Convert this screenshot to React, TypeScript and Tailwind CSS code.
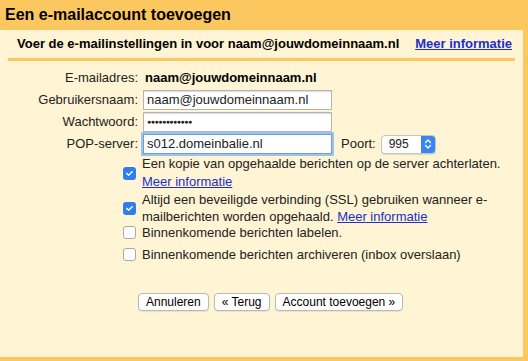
import { FaCheck } from "react-icons/fa";

function Check({ checked }: { checked: boolean }) {
  return checked ? (
    <span className="flex h-[13px] w-[13px] shrink-0 items-center justify-center rounded-[3px] bg-[#2f7ef0] text-white">
      <FaCheck className="h-[7px] w-[7px]" />
    </span>
  ) : (
    <span className="h-[13px] w-[13px] shrink-0 rounded-[3px] border border-[#a9a9a9] bg-white" />
  );
}

export default function App() {
  const font = { fontFamily: '"Liberation Sans", Arial, sans-serif' };

  return (
    <div className="flex h-[361px] w-[528px] flex-col bg-[#fcc75e] text-[13px] text-[#222]" style={font}>
      {/* Title */}
      <div className="flex h-[30px] items-center px-[5px] text-[16px] font-bold text-black">
        Een e-mailaccount toevoegen
      </div>

      {/* Panel */}
      <div className="mb-[4px] mr-[5px] flex flex-1 flex-col bg-[#fff4d3]">
        <div className="mx-[8px] flex h-[31px] items-center justify-between border-b-[3px] border-[#fcc75e] pl-[9px] pr-[3px] font-bold text-black">
          <span>Voer de e-mailinstellingen in voor naam@jouwdomeinnaam.nl</span>
          <a href="#" className="text-[#1a2fcc] underline">
            Meer informatie
          </a>
        </div>

        <div className="mt-[7px] grid grid-cols-[138px_1fr] items-center gap-x-[5px] gap-y-[2px]">
          <span className="h-[20px] text-right leading-[20px]">E-mailadres:</span>
          <span className="ml-[2px] h-[20px] font-bold leading-[20px] text-black">naam@jouwdomeinnaam.nl</span>

          <span className="text-right">Gebruikersnaam:</span>
          <div className="flex h-[20px] w-[189px] items-center border border-[#b5b5b5] bg-white px-[3px] shadow-[inset_0_1px_1px_rgba(0,0,0,0.15)]">
            naam@jouwdomeinnaam.nl
          </div>

          <span className="text-right">Wachtwoord:</span>
          <div className="flex h-[20px] w-[189px] items-center border border-[#b5b5b5] bg-white px-[3px] text-[7px] tracking-[-0.5px] shadow-[inset_0_1px_1px_rgba(0,0,0,0.15)]">
            ●●●●●●●●●●●●
          </div>

          <span className="text-right">POP-server:</span>
          <div className="flex items-center">
            <div className="flex h-[20px] w-[189px] items-center border border-[#6e9fd8] bg-white px-[3px] shadow-[0_0_0_2px_#9cc2ee]">
              s012.domeinbalie.nl
            </div>
            <span className="ml-[9px]">Poort:</span>
            <div className="ml-[5px] flex h-[19px] w-[55px] items-center justify-between rounded-[4px] border border-[#c4c4c4] bg-white pl-[7px] text-[12px] shadow-[0_1px_1px_rgba(0,0,0,0.1)]">
              995
              <span className="flex h-full w-[14px] items-center justify-center rounded-r-[3px] bg-[#3a86f0]">
                <svg width="8" height="12" viewBox="0 0 8 12" fill="none" stroke="white" strokeWidth="1.4" strokeLinecap="round" strokeLinejoin="round">
                  <path d="M1.5 4.5 L4 2 L6.5 4.5" />
                  <path d="M1.5 7.5 L4 10 L6.5 7.5" />
                </svg>
              </span>
            </div>
          </div>
        </div>

        <div className="ml-[123px] mt-[1px] flex flex-col">
          <div className="flex items-center gap-[6px] leading-[18px]">
            <Check checked />
            <div className="w-[366px]">
              Een kopie van opgehaalde berichten op de server achterlaten.
              <br />
              <a href="#" className="text-[#1a2fcc] underline">Meer informatie</a>
            </div>
          </div>
          <div className="flex items-center gap-[6px] leading-[17px]">
            <Check checked />
            <div className="w-[366px]">
              Altijd een beveiligde verbinding (SSL) gebruiken wanneer e-mailberichten worden opgehaald.{" "}
              <a href="#" className="text-[#1a2fcc] underline">Meer informatie</a>
            </div>
          </div>
          <div className="mt-[-1px] flex items-center gap-[6px] leading-[17px]">
            <Check checked={false} />
            <span>Binnenkomende berichten labelen.</span>
          </div>
          <div className="mt-[5px] flex items-center gap-[6px] leading-[17px]">
            <Check checked={false} />
            <span>Binnenkomende berichten archiveren (inbox overslaan)</span>
          </div>
        </div>

        <div className="ml-[138px] mt-[30px] flex gap-[5px] text-[12px] text-black">
          {["Annuleren", "« Terug", "Account toevoegen »"].map((b) => (
            <button
              key={b}
              className="h-[18px] rounded-[4px] border border-[#b9b9b9] bg-white px-[7px] leading-[16px] shadow-[0_1px_1px_rgba(0,0,0,0.08)]"
            >
              {b}
            </button>
          ))}
        </div>
      </div>
    </div>
  );
}
